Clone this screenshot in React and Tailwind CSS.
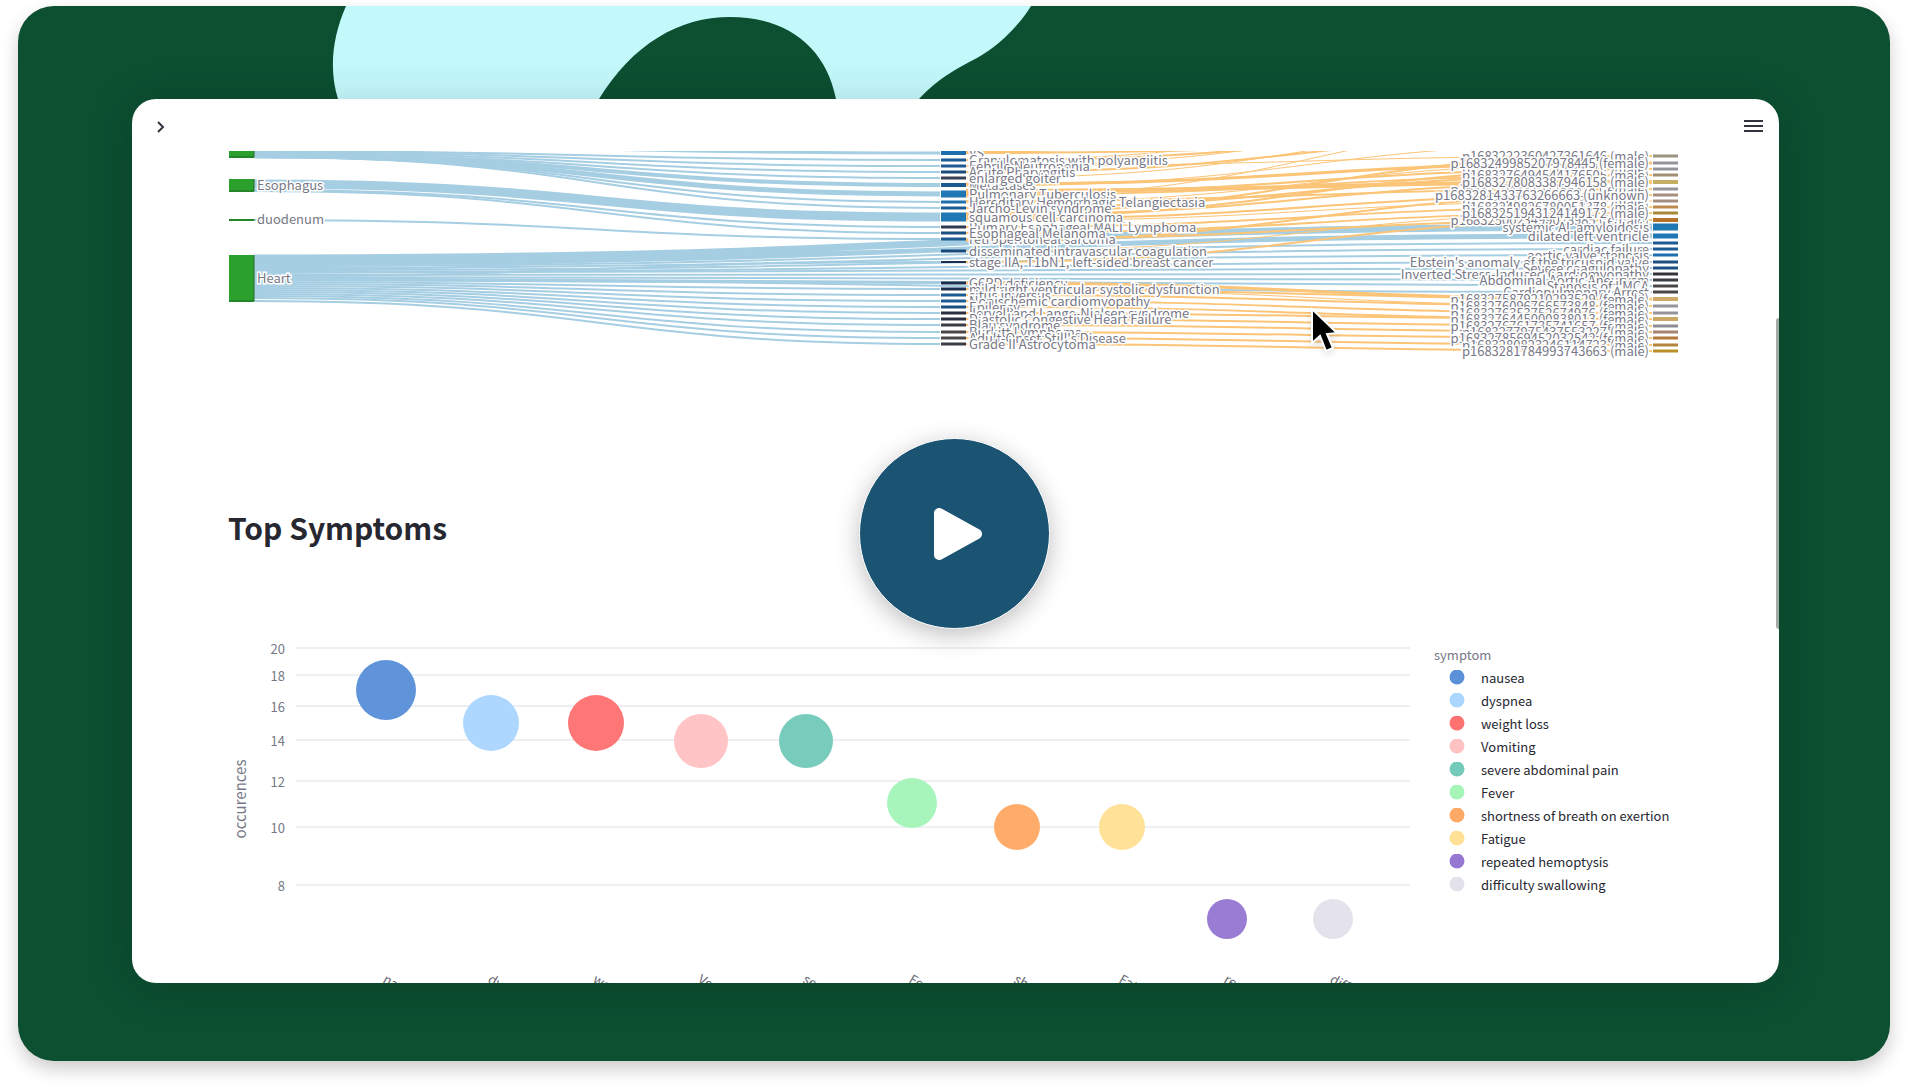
import React from "react";

const organs = [
    { y: 0, h: 7, label: "" },
    { y: 28, h: 13, label: "Esophagus" },
    { y: 68, h: 2, label: "duodenum" },
    { y: 104, h: 47, label: "Heart" },
];

// y is the vertical centre of the node, front labels are painted last
const diagnoses = [
    { y: 2, h: 4, color: "#1f6fb0", label: "VS" },
    { y: 9, h: 3, color: "#1c5a94", label: "Granulomatosis with polyangiitis" },
    { y: 15, h: 3, color: "#1c5a94", label: "Febrile Neutropenia" },
    { y: 21, h: 3, color: "#1a4a7c", label: "Acute Pharyngitis" },
    { y: 27, h: 3, color: "#3a3f55", label: "enlarged goiter", front: true },
    { y: 34, h: 4, color: "#1c5a94", label: "Metastases" },
    { y: 43, h: 7, color: "#1f77b4", label: "Pulmonary Tuberculosis" },
    { y: 51, h: 3, color: "#1f6fb0", label: "Hereditary Hemorrhagic Telangiectasia" },
    { y: 57, h: 3, color: "#1c5a94", label: "Jarcho-Levin syndrome", front: true },
    { y: 66, h: 9, color: "#1f77b4", label: "squamous cell carcinoma", front: true },
    { y: 76, h: 3, color: "#2d3a52", label: "Primary Esophageal MALT Lymphoma" },
    { y: 82, h: 3, color: "#1c4f82", label: "Esophageal Melanoma", front: true },
    { y: 88, h: 3, color: "#1c5a94", label: "retroperitoneal sarcoma" },
    { y: 100, h: 3, color: "#1a4a7c", label: "disseminated intravascular coagulation" },
    { y: 111, h: 2, color: "#1d2f4d", label: "stage IIA, T1bN1, left-sided breast cancer" },
    { y: 132, h: 3, color: "#1d2f4d", label: "G6PD deficiency" },
    { y: 138, h: 3, color: "#1d2f4d", label: "mild right ventricular systolic dysfunction" },
    { y: 144, h: 3, color: "#1c5a94", label: "situs inversus" },
    { y: 150, h: 3, color: "#1c5a94", label: "Nonischemic cardiomyopathy" },
    { y: 156, h: 3, color: "#1c4f82", label: "Epilepsy" },
    { y: 162, h: 3, color: "#2b2f40", label: "Jervell and Lange-Nielsen syndrome" },
    { y: 168, h: 3, color: "#2b2f40", label: "Diastolic Congestive Heart Failure" },
    { y: 174, h: 3, color: "#3c3c44", label: "Blau syndrome" },
    { y: 181, h: 3, color: "#4a4648", label: "Burkitt Lymphoma" },
    { y: 187, h: 3, color: "#4a4648", label: "Adult-Onset Still's Disease" },
    { y: 193, h: 3, color: "#3c3c44", label: "Grade II Astrocytoma", front: true },
];

const outcomes = [
    { y: 5, h: 3, color: "#9b9482", label: "p1683222360427361646 (male)" },
    { y: 12, h: 3, color: "#95949a", label: "p1683249985207978445 (female)", front: true },
    { y: 18, h: 3, color: "#95949a", label: "p1683276351020484411 (male)" },
    { y: 24, h: 3, color: "#a08f72", label: "p1683276494544176505 (male)" },
    { y: 31, h: 4, color: "#c3ae63", label: "p1683278083387946158 (male)", front: true },
    { y: 38, h: 3, color: "#95949a", label: "p1683279433102256618 (female)" },
    { y: 44, h: 3, color: "#a58d80", label: "p1683281433763266663 (unknown)", front: true },
    { y: 50, h: 3, color: "#a58d80", label: "p1683249724018823107 (male)" },
    { y: 56, h: 3, color: "#c08a4f", label: "p1683249826780051378 (male)" },
    { y: 62, h: 3, color: "#a8893a", label: "p1683251943124149172 (male)", front: true },
    { y: 69, h: 4, color: "#b5722b", label: "p1683250023499028985 (female)" },
    { y: 76, h: 7, color: "#1f77b4", label: "systemic AL amyloidosis" },
    { y: 85, h: 5, color: "#1f77b4", label: "dilated left ventricle", front: true },
    { y: 92, h: 3, color: "#1c5a94", label: "" },
    { y: 98, h: 3, color: "#1c5a94", label: "cardiac failure" },
    { y: 104, h: 3, color: "#1f6fb0", label: "aortic valve stenosis" },
    { y: 111, h: 3, color: "#1c4f82", label: "Ebstein's anomaly of the tricuspid valve" },
    { y: 117, h: 3, color: "#1c4f82", label: "Severe coagulopathy" },
    { y: 123, h: 3, color: "#33343a", label: "Inverted Stress-Induced Cardiomyopathy" },
    { y: 129, h: 3, color: "#3c3c44", label: "Abdominal Aortic Aneurysm" },
    { y: 135, h: 3, color: "#4a4648", label: "Stenosis of LMCA" },
    { y: 141, h: 3, color: "#4a4648", label: "Cardiopulmonary Arrest" },
    { y: 148, h: 4, color: "#d0a869", label: "p1683275879210293529 (female)" },
    { y: 155, h: 3, color: "#95949a", label: "p1683276096766573848 (female)" },
    { y: 162, h: 3, color: "#95949a", label: "p1683276353752674976 (female)" },
    { y: 168, h: 4, color: "#c9a765", label: "p1683276445000838013 (female)" },
    { y: 175, h: 3, color: "#8d8c95", label: "p1683276761735741657 (female)" },
    { y: 181, h: 3, color: "#a58474", label: "p1683277975437553227 (male)" },
    { y: 187, h: 3, color: "#b5793f", label: "p1683278569452032542 (female)" },
    { y: 194, h: 3, color: "#b5853f", label: "p1683280823246114723 (male)" },
    { y: 200, h: 3, color: "#b8912a", label: "p1683281784993743663 (male)", front: true },
];

// [source y, target y, width]
const organLinks = [
    [-16, -10, 1], [-12, -4, 1], [-6, 2, 3], [0, 9, 2], [1, 15, 2], [2, 21, 2], [3, 27, 2],
    [4, 34, 4], [5, 43, 5], [6, 51, 2], [6, 57, 2],
    [33, 66, 9], [39, 76, 2], [40, 82, 2], [69, 88, 2],
    [119, 100, 2], [125, 111, 2],
    [129, 132, 2], [131, 138, 2], [133, 144, 2], [135, 150, 2], [137, 156, 2], [139, 162, 2],
    [141, 168, 2], [143, 174, 2], [145, 181, 2], [147, 187, 2], [150, 193, 2],
];

const heartLinks = [
    [107, 76, 7], [112, 85, 5], [115, 92, 2], [117, 98, 2], [119, 104, 2], [121, 111, 2],
    [122, 117, 2], [124, 123, 2], [126, 129, 2], [127, 135, 2], [129, 141, 2],
];

const patientLinks = [
    [0, -40, 3], [2, -12, 2], [9, -46, 1], [9, -22, 2], [15, -34, 1], [15, 5, 1], [21, -18, 2],
    [27, -28, 1], [33, 12, 3], [35, -8, 1], [40, 31, 4], [42, 18, 2], [44, 24, 2], [46, -30, 1],
    [50, 38, 2], [52, 12, 1], [57, 24, 2], [62, 5, 2], [64, 31, 2], [66, 18, 2], [68, 44, 2],
    [70, 50, 1], [76, 56, 2], [82, 62, 2], [88, 69, 2], [90, 44, 2], [100, 62, 1],
    [111, 69, 2], [132, 148, 3], [138, 148, 2], [138, 155, 1], [144, 155, 2],
    [150, 162, 2], [156, 168, 2], [162, 168, 2], [168, 175, 2], [174, 181, 2],
    [181, 187, 2], [187, 194, 2], [193, 200, 2],
];

const symptoms = [
    { label: "nausea", color: "#5b91d9", cx: 158, cy: 51, r: 30 },
    { label: "dyspnea", color: "#aad6ff", cx: 263, cy: 84, r: 28 },
    { label: "weight loss", color: "#ff7272", cx: 368, cy: 84, r: 28 },
    { label: "Vomiting", color: "#ffc2c3", cx: 473, cy: 102, r: 27 },
    { label: "severe abdominal pain", color: "#74cab9", cx: 578, cy: 102, r: 27 },
    { label: "Fever", color: "#a5f5b9", cx: 684, cy: 164, r: 25 },
    { label: "shortness of breath on exertion", color: "#ffa966", cx: 789, cy: 188, r: 23 },
    { label: "Fatigue", color: "#ffe095", cx: 894, cy: 188, r: 23 },
    { label: "repeated hemoptysis", color: "#9678d3", cx: 999, cy: 280, r: 20 },
    { label: "difficulty swallowing", color: "#e3e2ea", cx: 1105, cy: 280, r: 20 },
];

const ticks = [
    { value: 20, y: 9 },
    { value: 18, y: 36 },
    { value: 16, y: 67 },
    { value: 14, y: 101 },
    { value: 12, y: 142 },
    { value: 10, y: 188 },
    { value: 8, y: 246 },
];

const curve = (x0, y0, x1, y1) => {
    const mid = (x0 + x1) / 2;
    return `M${x0} ${y0}C${mid} ${y0} ${mid} ${y1} ${x1} ${y1}`;
};

function Links({ links, from, to, color }) {
    return (
        <g fill="none" stroke={color}>
            {links.map(([y0, y1, width], i) => (
                <path key={i} d={curve(from, y0, to, y1)} strokeWidth={width} />
            ))}
        </g>
    );
}

function NodeLabel({ x, y, anchor, children }) {
    return (
        <text
            x={x}
            y={y}
            textAnchor={anchor}
            className="fill-[#777886] stroke-white stroke-3 text-[13px] [paint-order:stroke]"
        >
            {children}
        </text>
    );
}

function Nodes({ nodes, x, labelX, anchor }) {
    const labels = [...nodes.filter((n) => !n.front), ...nodes.filter((n) => n.front)];
    return (
        <g>
            {nodes.map((node) => (
                <rect key={node.y} x={x} y={node.y - node.h / 2} width="25" height={node.h} fill={node.color} />
            ))}
            {labels.map((node) => (
                <NodeLabel key={node.y} x={labelX} y={node.y + 5} anchor={anchor}>
                    {node.label}
                </NodeLabel>
            ))}
        </g>
    );
}

function SankeyChart() {
    return (
        <svg viewBox="0 0 1450 210" className="block w-full overflow-hidden">
            <Links links={organLinks} from={26} to={712} color="#a6cee3" />
            <Links links={heartLinks} from={26} to={1424} color="#a6cee3" />
            <Links links={patientLinks} from={738} to={1424} color="#fbc477" />
            {organs.map((organ) => (
                <g key={organ.y}>
                    <rect x="1" y={organ.y} width="25" height={organ.h} fill="#2ca02c" />
                    <path d={`M1 ${organ.y + organ.h - 1}H26V${organ.y}`} fill="none" stroke="#1f6b24" />
                    <NodeLabel x={29} y={organ.y + organ.h / 2 + 4} anchor="start">
                        {organ.label}
                    </NodeLabel>
                </g>
            ))}
            <Nodes nodes={diagnoses} x={713} labelX={741} anchor="start" />
            <Nodes nodes={outcomes} x={1425} labelX={1421} anchor="end" />
            <path
                d="M1084 158V192L1092 185L1098 200L1105 197L1099 183L1109 182Z"
                fill="#000"
                stroke="#fff"
                strokeWidth="2"
                className="drop-shadow-md"
            />
        </svg>
    );
}

function BubbleChart() {
    return (
        <svg viewBox="0 0 1206 344" className="block min-w-0 flex-1 overflow-hidden">
            {ticks.map((tick) => (
                <g key={tick.value}>
                    <path d={`M68 ${tick.y}H1182`} stroke="#eeeff2" strokeWidth="2" />
                    <text x="57" y={tick.y + 6} textAnchor="end" className="fill-[#777886] text-[13px]">
                        {tick.value}
                    </text>
                </g>
            ))}
            <text
                transform="translate(18 160) rotate(-90)"
                textAnchor="middle"
                className="fill-[#777886] text-[15px]"
            >
                occurences
            </text>
            {symptoms.map((s) => (
                <g key={s.label}>
                    <circle cx={s.cx} cy={s.cy} r={s.r} fill={s.color} fillOpacity="0.97" />
                    <text
                        transform={`translate(${s.cx - 4} 343) rotate(30)`}
                        className="fill-[#666773] text-[13px]"
                    >
                        {s.label}
                    </text>
                </g>
            ))}
        </svg>
    );
}

function Legend() {
    return (
        <div className="w-[244px] shrink-0 pt-1 text-[13px] leading-[23px]">
            <p className="text-[#777886]">symptom</p>
            <ul className="pl-[15px]">
                {symptoms.map((s) => (
                    <li key={s.label} className="flex items-center gap-4 whitespace-nowrap text-[#262730]">
                        <svg viewBox="0 0 16 16" className="size-4 shrink-0">
                            <circle cx="8" cy="7" r="7.500" fill={s.color} />
                        </svg>
                        {s.label}
                    </li>
                ))}
            </ul>
        </div>
    );
}

function Dashboard() {
    return (
        <div className="relative overflow-hidden rounded-3xl bg-white shadow-[0_4px_48px_rgba(0,0,0,0.15)]">
            <header className="flex h-[52px] items-center justify-between pl-[22px] pr-4 pt-1 text-[#31333f]">
                <button type="button" aria-label="Open sidebar">
                    <svg viewBox="0 0 14 14" className="size-3.5" fill="none" stroke="currentColor" strokeWidth="2">
                        <path d="M4 2L9 7L4 12" />
                    </svg>
                </button>
                <button type="button" aria-label="Main menu">
                    <svg viewBox="0 0 19 14" className="h-3.5 w-[19px]" stroke="currentColor" strokeWidth="2">
                        <path d="M0 1H19M0 6H19M0 11H19" />
                    </svg>
                </button>
            </header>
            <main className="pl-24 pr-[101px]">
                <SankeyChart />
                <h2 className="mt-[146px] text-[30px] font-bold leading-10 text-[#262730]">Top Symptoms</h2>
                <div className="mt-[92px] flex">
                    <BubbleChart />
                    <Legend />
                </div>
            </main>
            <div className="absolute right-0 top-[219px] h-[311px] w-[3px] rounded-l bg-[#a3aaa7]" />
        </div>
    );
}

export default function App() {
    return (
        <div className="bg-white px-[18px] pb-[30px] pt-1.5 font-['Noto_Sans_CJK_JP','Noto_Sans',sans-serif]">
            <section className="relative overflow-hidden rounded-[36px] bg-[#0c4f31] pb-[78px] pl-[114px] pr-[111px] pt-[93px] shadow-[0_8px_18px_rgba(0,0,0,0.2)]">
                <svg viewBox="0 0 720 110" className="absolute left-[310px] top-0 h-[110px] w-[720px]">
                    <path
                        d="M18 0C4 32 1 64 10 93L14 110H263L271 93C305 38 351 11 402 11C460 11 498 42 508 93L512 110H575L591 93C612 71 628 63 649 52C672 39 692 18 703 0Z"
                        fill="#c4f9fc"
                    />
                </svg>
                <Dashboard />
                <div className="absolute inset-0 flex items-center justify-center">
                    <button
                        type="button"
                        aria-label="Play video"
                        className="flex size-[191px] items-center justify-center rounded-full border border-white bg-[#1b5373] shadow-[0_6px_24px_rgba(0,0,0,0.25)]"
                    >
                        <svg viewBox="0 0 48 52" className="ml-2 h-[52px] w-12">
                            <path
                                d="M5 5V47L43 26Z"
                                fill="#fff"
                                stroke="#fff"
                                strokeWidth="10"
                                strokeLinejoin="round"
                            />
                        </svg>
                    </button>
                </div>
            </section>
        </div>
    );
}
